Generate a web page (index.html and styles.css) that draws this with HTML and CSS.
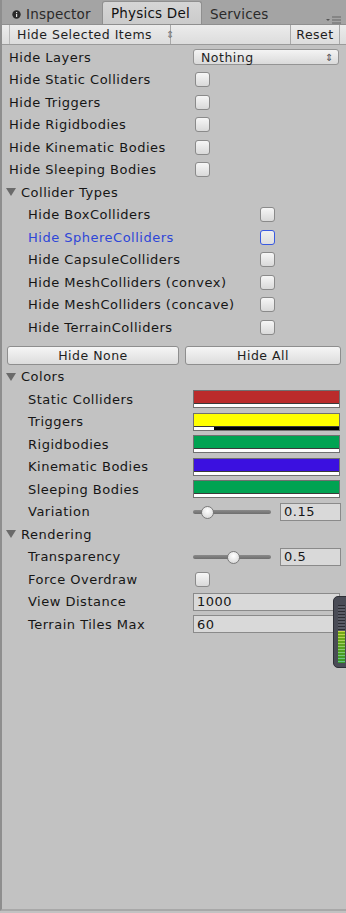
FILE: index.html
```html
<!DOCTYPE html>
<html lang="en">
<head>
    <meta charset="UTF-8">
    <meta name="viewport" content="width=device-width, initial-scale=1.0">
    <title>Physics Debug</title>
    <link rel="stylesheet" href="styles.css">
</head>
<body>
    <div class="window">
        <div class="tab-bar">
            <div class="tab">
                <svg class="tab-icon" width="9" height="9" viewBox="0 0 9 9"><circle cx="4.5" cy="4.5" r="4.2" fill="#2a2a2a"/><rect x="4" y="2" width="1.2" height="1.2" fill="#ddd"/><rect x="4" y="4" width="1.2" height="3" fill="#ddd"/></svg>
                Inspector
            </div>
            <div class="tab active">Physics Del</div>
            <div class="tab">Services</div>
            <div class="tab-menu">
                <svg width="16" height="8" viewBox="0 0 16 8"><path d="M0 3h4l-2 2z" fill="#555"/><path d="M6 1h9M6 4h9M6 7h9" stroke="#666" stroke-width="1.2"/></svg>
            </div>
        </div>

        <div class="toolbar">
            <div class="tool-dropdown">Hide Selected Items <span class="updown">&#8661;</span></div>
            <div class="tool-spacer"></div>
            <div class="tool-button">Reset</div>
        </div>

        <div class="content">
            <div class="row">
                <span class="label">Hide Layers</span>
                <div class="popup">Nothing <span class="updown">&#8661;</span></div>
            </div>
            <div class="row"><span class="label">Hide Static Colliders</span><span class="check"></span></div>
            <div class="row"><span class="label">Hide Triggers</span><span class="check"></span></div>
            <div class="row"><span class="label">Hide Rigidbodies</span><span class="check"></span></div>
            <div class="row"><span class="label">Hide Kinematic Bodies</span><span class="check"></span></div>
            <div class="row"><span class="label">Hide Sleeping Bodies</span><span class="check"></span></div>

            <div class="row foldout"><span class="arrow"></span>Collider Types</div>
            <div class="row sub wide"><span class="label">Hide BoxColliders</span><span class="check"></span></div>
            <div class="row sub wide focused"><span class="label">Hide SphereColliders</span><span class="check"></span></div>
            <div class="row sub wide"><span class="label">Hide CapsuleColliders</span><span class="check"></span></div>
            <div class="row sub wide"><span class="label">Hide MeshColliders (convex)</span><span class="check"></span></div>
            <div class="row sub wide"><span class="label">Hide MeshColliders (concave)</span><span class="check"></span></div>
            <div class="row sub wide"><span class="label">Hide TerrainColliders</span><span class="check"></span></div>

            <div class="button-row">
                <div class="button">Hide None</div>
                <div class="button">Hide All</div>
            </div>

            <div class="row foldout"><span class="arrow"></span>Colors</div>
            <div class="row sub">
                <span class="label">Static Colliders</span>
                <div class="color-field"><div class="swatch red"></div><div class="alpha"><div class="alpha-white" style="width: 100%"></div></div></div>
            </div>
            <div class="row sub">
                <span class="label">Triggers</span>
                <div class="color-field"><div class="swatch yellow"></div><div class="alpha"><div class="alpha-white" style="width: 14%"></div></div></div>
            </div>
            <div class="row sub">
                <span class="label">Rigidbodies</span>
                <div class="color-field"><div class="swatch green"></div><div class="alpha"><div class="alpha-white" style="width: 100%"></div></div></div>
            </div>
            <div class="row sub">
                <span class="label">Kinematic Bodies</span>
                <div class="color-field"><div class="swatch blue"></div><div class="alpha"><div class="alpha-white" style="width: 100%"></div></div></div>
            </div>
            <div class="row sub">
                <span class="label">Sleeping Bodies</span>
                <div class="color-field"><div class="swatch green"></div><div class="alpha"><div class="alpha-white" style="width: 100%"></div></div></div>
            </div>
            <div class="row sub">
                <span class="label">Variation</span>
                <div class="slider"><div class="track"></div><div class="thumb" style="left: 8px"></div></div>
                <div class="number">0.15</div>
            </div>

            <div class="row foldout"><span class="arrow"></span>Rendering</div>
            <div class="row sub">
                <span class="label">Transparency</span>
                <div class="slider"><div class="track"></div><div class="thumb" style="left: 34px"></div></div>
                <div class="number">0.5</div>
            </div>
            <div class="row sub"><span class="label">Force Overdraw</span><span class="check"></span></div>
            <div class="row sub"><span class="label">View Distance</span><div class="field">1000</div></div>
            <div class="row sub"><span class="label">Terrain Tiles Max</span><div class="field">60</div></div>
        </div>

        <div class="meter">
            <div class="meter-lines"></div>
            <div class="meter-level"></div>
        </div>
    </div>
</body>
</html>
```

FILE: styles.css
```css
body {
    margin: 0;
    background-color: #c2c2c2;
    font-family: "DejaVu Sans", Verdana, sans-serif;
    font-size: 13px;
    color: #161616;
}

.window {
    position: relative;
    height: 911px;
    border-left: 2px solid #8e8e8e;
    border-bottom: 2px solid #a8a8a8;
    box-sizing: border-box;
    overflow: hidden;
}

/* tabs */
.tab-bar {
    height: 24px;
    background-color: #a4a4a4;
    display: flex;
    align-items: flex-end;
    padding-left: 4px;
    position: relative;
}

.tab {
    height: 20px;
    padding: 0 8px;
    display: flex;
    align-items: center;
    gap: 5px;
    color: #2a2a2a;
    font-size: 13.5px;
    letter-spacing: 0.2px;
}

.tab:first-child {
    padding-left: 6px;
    width: 82px;
}

.tab.active {
    height: 22px;
    width: 82px;
    background: linear-gradient(#d6d6d6, #cbcbcb);
    border: 1px solid #8f8f8f;
    border-bottom: none;
    border-radius: 3px 3px 0 0;
    color: #111;
    overflow: hidden;
    white-space: nowrap;
}

.tab:last-of-type {
    padding-left: 9px;
}

.tab-menu {
    position: absolute;
    right: 4px;
    top: 12px;
}

/* toolbar */
.toolbar {
    height: 21px;
    display: flex;
    background: linear-gradient(#ececec, #dcdcdc);
    border-top: 1px solid #8f8f8f;
    border-bottom: 1px solid #9a9a9a;
    box-sizing: border-box;
    padding-left: 7px;
    font-size: 12.5px;
    letter-spacing: 0.5px;
    color: #1e1e1e;
}

.tool-dropdown {
    width: 162px;
    display: flex;
    align-items: center;
    padding-left: 7px;
    box-sizing: border-box;
    border-left: 1px solid #b8b8b8;
    border-right: 1px solid #a8a8a8;
    gap: 14px;
    white-space: nowrap;
}

.tool-dropdown .updown {
    font-size: 10px;
    color: #777;
}

.tool-spacer {
    flex: 1;
    border-right: 1px solid #a8a8a8;
}

.tool-button {
    width: 48px;
    display: flex;
    align-items: center;
    justify-content: center;
    border-right: 1px solid #a8a8a8;
    margin-right: 6px;
}

/* rows */
.content {
    padding-top: 1px;
    letter-spacing: 0.5px;
}

.row {
    height: 22.5px;
    display: flex;
    align-items: center;
    padding-left: 7px;
}

.label {
    width: 184px;
    flex-shrink: 0;
    white-space: nowrap;
}

.row.sub {
    padding-left: 26px;
}

.row.sub .label {
    width: 165px;
}

.row.sub.wide .label {
    width: 230px;
}

.row.focused .label {
    color: #2e46d8;
}

.check {
    width: 13px;
    height: 13px;
    margin-left: 2px;
    border: 1px solid #8a8a8a;
    border-radius: 3px;
    background: linear-gradient(#f6f6f6, #d9d9d9);
}

.row.focused .check {
    border: 1.5px solid #3a5ae0;
    background: linear-gradient(#f0f0f0, #dedede);
}

.popup {
    width: 146px;
    height: 16px;
    box-sizing: border-box;
    border: 1px solid #949494;
    border-radius: 3px;
    background: linear-gradient(#f4f4f4, #dadada);
    display: flex;
    align-items: center;
    justify-content: space-between;
    padding: 0 4px 0 7px;
    font-size: 12.5px;
    letter-spacing: 0.5px;
    color: #1e1e1e;
}

.updown {
    font-size: 10px;
    color: #555;
}

.foldout {
    gap: 5px;
    padding-left: 3px;
}

.arrow {
    width: 0;
    height: 0;
    border-left: 5px solid transparent;
    border-right: 5px solid transparent;
    border-top: 8px solid #6a6a6a;
    margin-left: 1px;
}

.button-row {
    height: 27px;
    display: flex;
    gap: 6px;
    padding: 7px 5px 0 5px;
    box-sizing: border-box;
}

.button {
    flex: 1;
    height: 17px;
    border: 1px solid #8e8e8e;
    border-radius: 3px;
    background: linear-gradient(#f6f6f6, #dcdcdc);
    display: flex;
    align-items: center;
    justify-content: center;
    font-size: 12.5px;
    letter-spacing: 0.5px;
    color: #1e1e1e;
}

.button:first-child {
    flex: 0 0 170px;
}

/* color fields */
.color-field {
    width: 147px;
    height: 18px;
    box-sizing: border-box;
    border: 1px solid #707070;
    display: flex;
    flex-direction: column;
    background-color: #000;
}

.swatch {
    flex: 1;
}

.swatch.red { background-color: #bb2b2b; }
.swatch.yellow { background-color: #ffff00; }
.swatch.green { background-color: #00a352; }
.swatch.blue { background-color: #3b10e0; }

.alpha {
    height: 3px;
    border-top: 1px solid #3a3a3a;
    background-color: #000;
}

.alpha-white {
    height: 100%;
    background-color: #fff;
}

/* slider + numbers */
.slider {
    position: relative;
    width: 78px;
    height: 14px;
    margin-right: 9px;
}

.track {
    position: absolute;
    left: 0;
    right: 0;
    top: 5px;
    height: 4px;
    border-radius: 2px;
    background: linear-gradient(#8a8a8a, #6e6e6e);
}

.thumb {
    position: absolute;
    top: 1px;
    width: 11px;
    height: 11px;
    border-radius: 50%;
    border: 1px solid #7a7a7a;
    background: radial-gradient(circle at 50% 35%, #ffffff, #d2d2d2);
}

.number, .field {
    height: 18px;
    box-sizing: border-box;
    border: 1px solid #8a8a8a;
    background-color: #d9d9d9;
    display: flex;
    align-items: center;
    padding-left: 3px;
    font-size: 13px;
}

.number {
    width: 61px;
}

.field {
    width: 147px;
}

/* screen recorder overlay */
.meter {
    position: absolute;
    left: 331px;
    top: 596px;
    width: 16px;
    height: 72px;
    border-radius: 5px 0 0 5px;
    background-color: #4a4c56;
    border: 1px solid #2e2f36;
    box-sizing: border-box;
}

.meter-lines {
    position: absolute;
    left: 4px;
    top: 8px;
    width: 7px;
    height: 58px;
    background: repeating-linear-gradient(#2c2d33 0 1px, #5a5c66 1px 3px);
}

.meter-level {
    position: absolute;
    left: 4px;
    top: 34px;
    width: 7px;
    height: 32px;
    background: repeating-linear-gradient(transparent 0 1px, #9acb4a 1px 3px), linear-gradient(#c8d84a, #5ec090);
    background-blend-mode: multiply;
}
```
